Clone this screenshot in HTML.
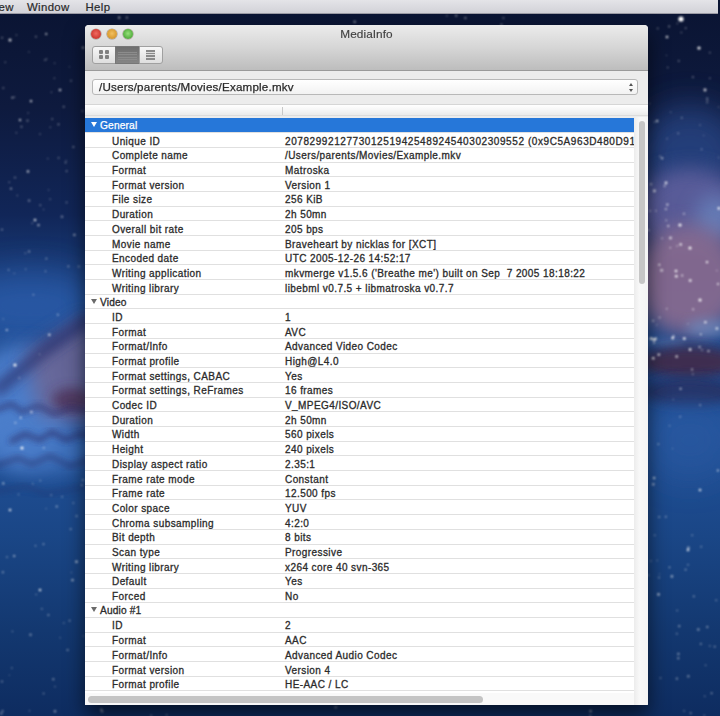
<!DOCTYPE html>
<html><head><meta charset="utf-8">
<style>
html,body{margin:0;padding:0;width:720px;height:716px;overflow:hidden;}
body{position:relative;font-family:"Liberation Sans",sans-serif;background:#0d1a3a;}
#bg{position:absolute;left:0;top:0;width:720px;height:716px;}
#menubar{position:absolute;left:0;top:0;width:718px;height:13px;background:linear-gradient(#e4e4e8,#d2d2d8);border-bottom:1px solid #9a9aa4;}
#menubar span{position:absolute;top:0.7px;font-size:11.4px;letter-spacing:0.35px;line-height:13px;color:#2a2a2a;-webkit-text-stroke:0.2px #2a2a2a;}
#shadow{position:absolute;left:85px;top:25px;width:563px;height:680px;border-radius:4px;box-shadow:0 10px 20px 0px rgba(0,0,0,0.6);}
#win{position:absolute;left:85px;top:25px;width:563px;height:680px;background:#ececec;border-radius:4px 4px 1px 1px;overflow:hidden;filter:blur(0.3px);}
#tb{position:absolute;left:0;top:0;width:563px;height:45px;background:linear-gradient(#ebebeb,#d6d6d6 50%,#bdbdbd);border-bottom:1px solid #9a9a9a;}
#title{position:absolute;left:0;width:563px;top:1.7px;text-align:center;font-size:11.8px;letter-spacing:0.05px;color:#404040;-webkit-text-stroke:0.15px #404040;}
.tl{position:absolute;top:4px;width:10px;height:10px;border-radius:50%;box-shadow:0 0 0 0.6px rgba(90,60,40,0.45);}
.seg{position:absolute;top:21px;height:18px;border:1px solid #a0a0a0;background:linear-gradient(#f7f7f7,#dedede);box-sizing:border-box;}
.seg.dark{background:linear-gradient(#6e6e6e,#858585);border-color:#777;}
.sq{position:absolute;width:4px;height:3.6px;background:#808080;border-radius:1px;}
.ln{position:absolute;left:2px;width:19px;height:1px;background:#8c8c8c;}
.bx{position:absolute;left:6px;top:3px;width:9px;height:10px;background:#8a8a8a;}
.bx div{height:1px;background:#dcdcdc;margin-top:1.6px;}
#popup{position:absolute;left:7px;top:54px;width:546px;height:15.5px;border:1px solid #b8b8b8;border-radius:3px;background:linear-gradient(#ffffff,#f2f2f2);box-sizing:border-box;}
.ar{position:absolute;left:535.5px;width:0;height:0;border-left:2px solid transparent;border-right:2px solid transparent;}
#popup span{position:absolute;left:6px;top:0px;font-size:11.6px;letter-spacing:0.2px;line-height:13px;color:#2a2a2a;-webkit-text-stroke:0.25px #2a2a2a;}
#thead{position:absolute;left:0;top:79px;width:563px;height:12px;background:linear-gradient(#ffffff,#f6f6f6 50%,#ebebeb);border-top:1px solid #d6d6d6;border-bottom:1px solid #dcdcdc;box-sizing:border-box;}
#table{position:absolute;left:0;top:0;width:549px;height:680px;}
.row{position:absolute;left:0;width:550px;height:14.69px;background:#ffffff;border-top:1px solid #e0e0e0;box-sizing:border-box;font-size:10px;letter-spacing:0.42px;line-height:13px;color:#2b2b2b;-webkit-text-stroke:0.3px #2b2b2b;white-space:pre;overflow:hidden;}
.row .k{position:absolute;left:27px;top:1.5px;}
.row .v{position:absolute;left:200px;top:1.5px;}
.hd .tri{position:absolute;left:6.4px;top:3.8px;width:0;height:0;border-left:3.1px solid transparent;border-right:3.1px solid transparent;border-top:5.8px solid #6a6a6a;}
.hd .hn{position:absolute;left:15px;top:0.8px;letter-spacing:0.15px;font-size:10.2px;}
.sel{background:#2677d9;border-top:1px solid #2677d9;}
.sel .hn{color:#fff;-webkit-text-stroke:0.25px #fff;} .sel .tri{border-top-color:#fff;}
#vs{position:absolute;left:549px;top:92px;width:14px;height:588px;background:linear-gradient(90deg,#ececec,#f8f8f8 40%,#f4f4f4);}
#vthumb{position:absolute;left:4.5px;top:4px;width:6px;height:163px;border-radius:3px;background:#c6c6c6;}
#hs{position:absolute;left:0;top:668px;width:549px;height:12px;background:#f9f9f9;}
#hthumb{position:absolute;left:3px;top:3px;width:395px;height:7px;border-radius:4px;background:#c4c4c4;}
</style></head><body>
<svg id="bg" width="720" height="716" viewBox="0 0 720 716">
 <defs>
  <linearGradient id="base" x1="0" y1="0" x2="0" y2="1">
   <stop offset="0" stop-color="#0a1432"/>
   <stop offset="0.15" stop-color="#0e1a3e"/>
   <stop offset="0.3" stop-color="#112658"/>
   <stop offset="0.42" stop-color="#1d4688"/>
   <stop offset="0.6" stop-color="#22529a"/>
   <stop offset="0.75" stop-color="#1a4686"/>
   <stop offset="0.88" stop-color="#133870"/>
   <stop offset="1" stop-color="#0e2c60"/>
  </linearGradient>
  <filter id="b16" x="-50%" y="-50%" width="200%" height="200%"><feGaussianBlur stdDeviation="16"/></filter>
  <filter id="b10" x="-50%" y="-50%" width="200%" height="200%"><feGaussianBlur stdDeviation="10"/></filter>
  <filter id="b6" x="-50%" y="-50%" width="200%" height="200%"><feGaussianBlur stdDeviation="6"/></filter>
  <filter id="b3" x="-50%" y="-50%" width="200%" height="200%"><feGaussianBlur stdDeviation="3"/></filter>
  <filter id="b1" x="-50%" y="-50%" width="200%" height="200%"><feGaussianBlur stdDeviation="0.8"/></filter>
 </defs>
 <rect width="720" height="716" fill="url(#base)"/>
 <!-- left galaxy -->
 <ellipse cx="30" cy="305" rx="70" ry="35" fill="#2f62b4" opacity="0.6" filter="url(#b16)"/>
 <ellipse cx="20" cy="405" rx="50" ry="60" fill="#5286d4" opacity="0.85" filter="url(#b10)"/>
 <ellipse cx="40" cy="450" rx="50" ry="25" fill="#4a7cc8" opacity="0.7" filter="url(#b10)"/>
 <polygon points="25,355 85,318 95,325 95,425 40,415" fill="#6a6696" opacity="0.9" filter="url(#b10)"/>
 <path d="M-5,392 L45,350 L90,318" stroke="#2c2e6a" stroke-width="12" fill="none" opacity="0.75" filter="url(#b6)"/>
 <ellipse cx="72" cy="400" rx="20" ry="12" fill="#4a2c50" opacity="0.75" filter="url(#b6)"/>
 <path d="M-5,410 L12,404 L22,412 L38,406 L55,414 L70,408 L95,412" stroke="#2c2c68" stroke-width="4" fill="none" opacity="0.75" filter="url(#b3)"/>
 <path d="M10,442 L25,434 L40,440 L52,432 L66,440 L80,434 L98,438" stroke="#2a2c66" stroke-width="4.5" fill="none" opacity="0.75" filter="url(#b3)"/>
 <path d="M-5,466 L18,458 L32,464 L50,456 L70,466 L95,458" stroke="#282c66" stroke-width="4" fill="none" opacity="0.65" filter="url(#b3)"/>
 <path d="M-5,492 L25,486 L45,494 L90,486" stroke="#24306a" stroke-width="4" fill="none" opacity="0.45" filter="url(#b3)"/>
 <!-- right galaxy -->
 <ellipse cx="690" cy="160" rx="55" ry="55" fill="#2a4a8a" opacity="0.75" filter="url(#b16)"/>
 <ellipse cx="690" cy="210" rx="55" ry="42" fill="#5e5e9c" opacity="0.9" filter="url(#b10)"/>
 <ellipse cx="715" cy="220" rx="20" ry="25" fill="#6a8ac4" opacity="0.7" filter="url(#b10)"/>
 <ellipse cx="688" cy="280" rx="55" ry="55" fill="#866a90" opacity="0.95" filter="url(#b10)"/>
 <ellipse cx="708" cy="328" rx="22" ry="9" fill="#7494c8" opacity="0.6" filter="url(#b6)"/>
 <ellipse cx="665" cy="343" rx="20" ry="5" fill="#6a8cc0" opacity="0.35" filter="url(#b3)"/>
 <ellipse cx="690" cy="362" rx="50" ry="16" fill="#432a4a" opacity="0.9" filter="url(#b6)"/>
 <ellipse cx="690" cy="392" rx="48" ry="14" fill="#262a58" opacity="0.8" filter="url(#b6)"/>
 <ellipse cx="690" cy="440" rx="45" ry="40" fill="#2a5aa2" opacity="0.6" filter="url(#b16)"/>
 <!-- stars -->
 <g fill="#fff" filter="url(#b1)">
  <circle cx="681" cy="19" r="2.6"/>
  <circle cx="699" cy="48" r="1.60" opacity="0.95"/>
  <circle cx="667" cy="37" r="1.30" opacity="0.81"/>
  <circle cx="705" cy="90" r="1.43" opacity="0.81"/>
  <circle cx="680" cy="225" r="1.60" opacity="0.95"/>
  <circle cx="690" cy="248" r="1.56" opacity="0.94"/>
  <circle cx="700" cy="300" r="1.56" opacity="0.94"/>
  <circle cx="676" cy="271" r="1.30" opacity="0.94"/>
  <circle cx="688" cy="550" r="1.30" opacity="0.81"/>
  <circle cx="700" cy="490" r="1.30" opacity="0.81"/>
  <circle cx="15" cy="365" r="1.60" opacity="0.95"/>
  <circle cx="22" cy="448" r="1.56" opacity="0.94"/>
  <circle cx="40" cy="590" r="1.30" opacity="0.81"/>
  <circle cx="10" cy="510" r="1.30" opacity="0.81"/>
  <circle cx="35" cy="220" r="1.30" opacity="0.81"/>
  <circle cx="60" cy="90" r="1.30" opacity="0.68"/>
  <circle cx="20" cy="120" r="1.17" opacity="0.68"/>
  <circle cx="27.5" cy="120.7" r="1.08" opacity="0.38"/>
  <circle cx="45.5" cy="271.3" r="0.69" opacity="0.58"/>
  <circle cx="3.2" cy="319.0" r="0.69" opacity="0.38"/>
  <circle cx="36.1" cy="594.6" r="0.73" opacity="0.45"/>
  <circle cx="53.3" cy="679.3" r="1.03" opacity="0.53"/>
  <circle cx="83.0" cy="47.7" r="1.21" opacity="0.47"/>
  <circle cx="12.3" cy="97.6" r="0.85" opacity="0.73"/>
  <circle cx="15.4" cy="422.7" r="1.07" opacity="0.51"/>
  <circle cx="46.6" cy="59.0" r="0.69" opacity="0.43"/>
  <circle cx="57.8" cy="314.7" r="0.86" opacity="0.61"/>
  <circle cx="38.5" cy="225.1" r="1.17" opacity="0.66"/>
  <circle cx="20.7" cy="417.7" r="0.99" opacity="0.76"/>
  <circle cx="62.0" cy="216.8" r="1.29" opacity="0.39"/>
  <circle cx="35.5" cy="545.8" r="0.75" opacity="0.57"/>
  <circle cx="3.3" cy="483.4" r="1.14" opacity="0.61"/>
  <circle cx="74.4" cy="234.9" r="1.10" opacity="0.62"/>
  <circle cx="49.3" cy="334.8" r="1.20" opacity="0.78"/>
  <circle cx="40.3" cy="480.6" r="0.69" opacity="0.68"/>
  <circle cx="55.0" cy="711.2" r="1.18" opacity="0.47"/>
  <circle cx="32.8" cy="483.7" r="0.66" opacity="0.55"/>
  <circle cx="14.3" cy="97.1" r="0.69" opacity="0.70"/>
  <circle cx="11.0" cy="188.6" r="0.91" opacity="0.74"/>
  <circle cx="6.8" cy="329.9" r="1.00" opacity="0.76"/>
  <circle cx="69.6" cy="620.7" r="0.83" opacity="0.54"/>
  <circle cx="30.5" cy="634.8" r="1.27" opacity="0.41"/>
  <circle cx="15.0" cy="177.6" r="0.81" opacity="0.57"/>
  <circle cx="50.1" cy="199.2" r="0.65" opacity="0.54"/>
  <circle cx="31.4" cy="412.0" r="1.27" opacity="0.66"/>
  <circle cx="43.8" cy="447.9" r="1.09" opacity="0.36"/>
  <circle cx="76.5" cy="561.8" r="1.22" opacity="0.72"/>
  <circle cx="33.4" cy="294.7" r="0.72" opacity="0.63"/>
  <circle cx="5.3" cy="62.2" r="0.78" opacity="0.42"/>
  <circle cx="28.9" cy="51.9" r="0.65" opacity="0.41"/>
  <circle cx="8.6" cy="269.9" r="0.66" opacity="0.76"/>
  <circle cx="52.2" cy="119.1" r="0.82" opacity="0.50"/>
  <circle cx="31.0" cy="101.1" r="1.20" opacity="0.81"/>
  <circle cx="39.6" cy="354.2" r="0.70" opacity="0.39"/>
  <circle cx="29.1" cy="200.6" r="1.18" opacity="0.42"/>
  <circle cx="2.0" cy="681.6" r="0.99" opacity="0.41"/>
  <circle cx="46.2" cy="34.0" r="0.99" opacity="0.80"/>
  <circle cx="73.4" cy="503.0" r="0.82" opacity="0.51"/>
  <circle cx="14.2" cy="556.1" r="1.00" opacity="0.70"/>
  <circle cx="28.0" cy="171.4" r="1.18" opacity="0.80"/>
  <circle cx="72.5" cy="580.1" r="1.18" opacity="0.69"/>
  <circle cx="19.3" cy="377.9" r="0.88" opacity="0.35"/>
  <circle cx="650.0" cy="210.9" r="0.82" opacity="0.66"/>
  <circle cx="716.9" cy="328.5" r="1.26" opacity="0.81"/>
  <circle cx="716.8" cy="270.6" r="0.79" opacity="0.45"/>
  <circle cx="662.2" cy="158.3" r="1.05" opacity="0.77"/>
  <circle cx="708.5" cy="351.1" r="1.08" opacity="0.72"/>
  <circle cx="654.1" cy="478.1" r="1.23" opacity="0.70"/>
  <circle cx="702.0" cy="350.1" r="0.77" opacity="0.72"/>
  <circle cx="671.9" cy="576.4" r="1.29" opacity="0.53"/>
  <circle cx="676.9" cy="678.7" r="1.12" opacity="0.42"/>
  <circle cx="657.1" cy="121.0" r="1.23" opacity="0.72"/>
  <circle cx="658.5" cy="594.4" r="1.29" opacity="0.65"/>
  <circle cx="673.2" cy="399.6" r="0.74" opacity="0.34"/>
  <circle cx="717.9" cy="470.4" r="0.99" opacity="0.78"/>
  <circle cx="679.2" cy="626.1" r="1.18" opacity="0.43"/>
  <circle cx="666.1" cy="220.4" r="0.81" opacity="0.62"/>
  <circle cx="666.7" cy="308.7" r="0.74" opacity="0.77"/>
  <circle cx="673.5" cy="336.2" r="1.03" opacity="0.77"/>
  <circle cx="678.3" cy="658.3" r="0.98" opacity="0.59"/>
  <circle cx="685.7" cy="28.1" r="0.94" opacity="0.42"/>
  <circle cx="648.3" cy="575.2" r="0.77" opacity="0.57"/>
  <circle cx="700.2" cy="405.1" r="0.86" opacity="0.58"/>
  <circle cx="688.0" cy="564.8" r="0.72" opacity="0.61"/>
  <circle cx="665.9" cy="209.1" r="1.16" opacity="0.58"/>
  <circle cx="688.4" cy="547.8" r="1.25" opacity="0.55"/>
  <circle cx="692.1" cy="369.4" r="0.99" opacity="0.66"/>
  <circle cx="680.6" cy="388.8" r="0.96" opacity="0.78"/>
  <circle cx="698.3" cy="629.5" r="1.26" opacity="0.46"/>
  <circle cx="688.3" cy="676.2" r="1.20" opacity="0.41"/>
  <circle cx="656.8" cy="324.9" r="0.70" opacity="0.45"/>
  <circle cx="653.3" cy="484.3" r="1.16" opacity="0.76"/>
  <circle cx="659.1" cy="517.0" r="1.08" opacity="0.41"/>
  <circle cx="711.6" cy="693.2" r="0.79" opacity="0.78"/>
  <circle cx="676.7" cy="356.6" r="1.29" opacity="0.73"/>
  <circle cx="659.6" cy="317.5" r="0.99" opacity="0.50"/>
  <circle cx="662.1" cy="238.3" r="1.12" opacity="0.35"/>
  <circle cx="687.9" cy="323.8" r="0.66" opacity="0.50"/>
  <circle cx="692.9" cy="374.1" r="0.69" opacity="0.80"/>
  <circle cx="704.8" cy="696.2" r="0.72" opacity="0.46"/>
  <circle cx="650.9" cy="561.1" r="0.83" opacity="0.41"/>
  <circle cx="678.4" cy="653.9" r="1.18" opacity="0.46"/>
  <circle cx="658.8" cy="354.6" r="1.22" opacity="0.95"/>
  <circle cx="654.4" cy="190.9" r="1.31" opacity="0.80"/>
  <circle cx="653.2" cy="358.3" r="1.27" opacity="0.95"/>
  <circle cx="654.0" cy="342.7" r="0.83" opacity="0.95"/>
  <circle cx="680.7" cy="244.4" r="1.21" opacity="0.95"/>
  <circle cx="667.3" cy="204.6" r="1.20" opacity="0.69"/>
  <circle cx="655.9" cy="210.7" r="0.82" opacity="0.66"/>
  <circle cx="670.5" cy="238.0" r="1.38" opacity="0.72"/>
  <circle cx="684.0" cy="213.8" r="1.05" opacity="0.55"/>
  <circle cx="666.0" cy="182.9" r="1.35" opacity="0.88"/>
  <circle cx="661.6" cy="270.2" r="1.51" opacity="0.61"/>
  <circle cx="707.0" cy="262.1" r="1.17" opacity="0.95"/>
  <circle cx="676.3" cy="276.3" r="1.31" opacity="0.95"/>
  <circle cx="672.7" cy="338.1" r="1.33" opacity="0.93"/>
  <circle cx="677.1" cy="246.0" r="0.82" opacity="0.62"/>
  <circle cx="653.1" cy="320.8" r="0.98" opacity="0.63"/>
  <circle cx="654.1" cy="339.8" r="1.46" opacity="0.94"/>
  <circle cx="668.3" cy="226.0" r="1.01" opacity="0.82"/>
  <circle cx="659.3" cy="264.7" r="0.99" opacity="0.95"/>
  <circle cx="718.0" cy="283.9" r="0.98" opacity="0.95"/>
  <circle cx="670.3" cy="247.8" r="0.78" opacity="0.77"/>
  <circle cx="682.2" cy="275.5" r="0.94" opacity="0.85"/>
  <circle cx="648.4" cy="230.2" r="0.85" opacity="0.78"/>
  <circle cx="651.0" cy="184.3" r="1.01" opacity="0.68"/>
  <circle cx="690.2" cy="280.5" r="1.37" opacity="0.94"/>
  <circle cx="699.6" cy="347.0" r="1.08" opacity="0.74"/>
  <circle cx="718.9" cy="208.4" r="1.34" opacity="0.93"/>
  <circle cx="651.2" cy="338.7" r="1.48" opacity="0.92"/>
  <circle cx="700.8" cy="334.3" r="0.88" opacity="0.86"/>
  <circle cx="684.3" cy="338.6" r="1.40" opacity="0.95"/>
  <circle cx="690.1" cy="349.6" r="1.31" opacity="0.95"/>
  <circle cx="664.6" cy="185.9" r="0.88" opacity="0.76"/>
  <circle cx="655.6" cy="338.8" r="1.22" opacity="0.92"/>
  <circle cx="693.1" cy="309.3" r="1.16" opacity="0.54"/>
  <circle cx="705.4" cy="322.2" r="1.17" opacity="0.86"/>
  <circle cx="456.2" cy="15.7" r="1.13" opacity="0.46"/>
  <circle cx="126.9" cy="17.7" r="1.12" opacity="0.43"/>
  <circle cx="501.5" cy="24.8" r="0.98" opacity="0.51"/>
  <circle cx="354.7" cy="21.8" r="1.14" opacity="0.63"/>
  <circle cx="446.9" cy="15.8" r="0.74" opacity="0.46"/>
  <circle cx="503.4" cy="18.0" r="1.01" opacity="0.34"/>
  <circle cx="119.2" cy="17.7" r="1.09" opacity="0.66"/>
  <circle cx="465.4" cy="17.9" r="0.99" opacity="0.55"/>
  <circle cx="335.8" cy="707.2" r="1.23" opacity="0.43"/>
  <circle cx="704.3" cy="715.4" r="0.66" opacity="0.55"/>
  <circle cx="590.3" cy="715.7" r="0.94" opacity="0.46"/>
  <circle cx="151.1" cy="715.5" r="0.79" opacity="0.61"/>
  <circle cx="102.1" cy="711.2" r="1.27" opacity="0.41"/>
  <circle cx="590.6" cy="711.1" r="1.22" opacity="0.68"/>
  <circle cx="166.6" cy="715.0" r="0.96" opacity="0.35"/>
  <circle cx="2.6" cy="710.9" r="0.95" opacity="0.49"/>
  <circle cx="101.3" cy="709.4" r="0.86" opacity="0.73"/>
  <circle cx="1.3" cy="713.5" r="1.20" opacity="0.39"/>
  <circle cx="78.6" cy="266.4" r="0.96" opacity="0.33"/>
  <circle cx="50.3" cy="127.3" r="0.81" opacity="0.34"/>
  <circle cx="16.3" cy="132.8" r="0.69" opacity="0.44"/>
  <circle cx="2.1" cy="37.7" r="0.88" opacity="0.43"/>
  <circle cx="43.6" cy="209.6" r="0.74" opacity="0.32"/>
  <circle cx="66.6" cy="171.1" r="0.86" opacity="0.49"/>
  <circle cx="82.5" cy="111.1" r="0.90" opacity="0.41"/>
  <circle cx="48.6" cy="190.0" r="0.73" opacity="0.33"/>
  <circle cx="40.3" cy="205.2" r="0.84" opacity="0.43"/>
  <circle cx="54.6" cy="63.2" r="0.67" opacity="0.40"/>
  <circle cx="69.3" cy="66.8" r="0.65" opacity="0.33"/>
  <circle cx="3.3" cy="88.0" r="0.83" opacity="0.55"/>
  <circle cx="28.1" cy="113.0" r="0.72" opacity="0.39"/>
  <circle cx="66.1" cy="160.5" r="0.70" opacity="0.33"/>
  <circle cx="66.6" cy="202.4" r="0.93" opacity="0.37"/>
  <circle cx="46.4" cy="258.5" r="0.84" opacity="0.58"/>
  <circle cx="14.2" cy="273.4" r="0.62" opacity="0.42"/>
  <circle cx="2.0" cy="229.5" r="0.87" opacity="0.59"/>
  <circle cx="68.4" cy="266.4" r="0.82" opacity="0.60"/>
  <circle cx="63.7" cy="106.7" r="0.99" opacity="0.41"/>
  <circle cx="16.4" cy="35.1" r="0.79" opacity="0.36"/>
  <circle cx="79.4" cy="266.9" r="0.69" opacity="0.33"/>
  <circle cx="45.0" cy="60.0" r="0.82" opacity="0.54"/>
  <circle cx="21.5" cy="126.8" r="0.96" opacity="0.43"/>
  <circle cx="29.1" cy="251.5" r="0.93" opacity="0.57"/>
  <circle cx="58.5" cy="124.3" r="0.88" opacity="0.55"/>
  <circle cx="54.4" cy="78.2" r="0.72" opacity="0.42"/>
  <circle cx="65.6" cy="162.6" r="0.82" opacity="0.55"/>
  <circle cx="9.2" cy="182.3" r="0.73" opacity="0.47"/>
  <circle cx="71.0" cy="80.8" r="0.98" opacity="0.32"/>
  <circle cx="47.8" cy="158.6" r="0.69" opacity="0.47"/>
  <circle cx="40.0" cy="134.1" r="0.89" opacity="0.30"/>
  <circle cx="32.1" cy="223.2" r="0.66" opacity="0.56"/>
  <circle cx="17.3" cy="195.5" r="0.67" opacity="0.43"/>
  <circle cx="35.9" cy="36.7" r="0.88" opacity="0.44"/>
  <circle cx="58.6" cy="157.9" r="0.82" opacity="0.46"/>
  <circle cx="25.3" cy="253.2" r="0.63" opacity="0.56"/>
  <circle cx="73.4" cy="146.9" r="0.91" opacity="0.50"/>
  <circle cx="51.4" cy="92.3" r="0.73" opacity="0.40"/>
  <circle cx="25.7" cy="269.3" r="0.74" opacity="0.42"/>
  <circle cx="678.2" cy="133.4" r="0.79" opacity="0.47"/>
  <circle cx="666.4" cy="55.3" r="0.64" opacity="0.37"/>
  <circle cx="667.0" cy="138.6" r="0.80" opacity="0.33"/>
  <circle cx="681.3" cy="32.5" r="0.83" opacity="0.43"/>
  <circle cx="709.8" cy="52.6" r="0.94" opacity="0.37"/>
  <circle cx="718.7" cy="107.0" r="0.62" opacity="0.54"/>
  <circle cx="667.8" cy="67.5" r="0.66" opacity="0.55"/>
  <circle cx="654.5" cy="122.0" r="0.76" opacity="0.50"/>
  <circle cx="669.1" cy="26.4" r="0.97" opacity="0.50"/>
  <circle cx="660.2" cy="156.5" r="0.96" opacity="0.35"/>
  <circle cx="649.4" cy="103.6" r="0.66" opacity="0.52"/>
  <circle cx="681.8" cy="117.8" r="0.83" opacity="0.53"/>
  <circle cx="707.2" cy="102.4" r="0.84" opacity="0.40"/>
  <circle cx="657.7" cy="28.4" r="0.94" opacity="0.36"/>
  <circle cx="678.7" cy="60.9" r="0.85" opacity="0.46"/>
  <circle cx="709.9" cy="78.2" r="0.74" opacity="0.50"/>
  <circle cx="701.6" cy="149.2" r="0.72" opacity="0.57"/>
  <circle cx="718.7" cy="157.4" r="0.65" opacity="0.41"/>
  <circle cx="703.7" cy="135.5" r="0.62" opacity="0.42"/>
  <circle cx="700.1" cy="125.0" r="0.81" opacity="0.36"/>
  <circle cx="677.3" cy="23.5" r="0.73" opacity="0.43"/>
  <circle cx="707.3" cy="100.5" r="0.77" opacity="0.37"/>
  <circle cx="670.7" cy="112.3" r="0.78" opacity="0.35"/>
  <circle cx="707.2" cy="98.5" r="0.99" opacity="0.46"/>
  <circle cx="692.9" cy="77.0" r="0.84" opacity="0.58"/>
  <circle cx="83.4" cy="636.0" r="0.77" opacity="0.32"/>
  <circle cx="71.4" cy="572.4" r="0.75" opacity="0.32"/>
  <circle cx="2.9" cy="572.2" r="0.99" opacity="0.52"/>
  <circle cx="60.2" cy="637.8" r="0.71" opacity="0.35"/>
  <circle cx="51.2" cy="495.0" r="0.84" opacity="0.45"/>
  <circle cx="46.1" cy="508.6" r="0.63" opacity="0.44"/>
  <circle cx="12.4" cy="631.4" r="0.72" opacity="0.49"/>
  <circle cx="63.8" cy="623.1" r="0.81" opacity="0.36"/>
  <circle cx="29.5" cy="710.8" r="0.71" opacity="0.39"/>
  <circle cx="41.9" cy="608.8" r="0.92" opacity="0.39"/>
  <circle cx="81.8" cy="485.2" r="0.92" opacity="0.47"/>
  <circle cx="76.6" cy="516.1" r="0.88" opacity="0.58"/>
  <circle cx="56.7" cy="506.5" r="0.97" opacity="0.59"/>
  <circle cx="9.4" cy="675.2" r="0.63" opacity="0.32"/>
  <circle cx="67.6" cy="649.9" r="0.98" opacity="0.49"/>
  <circle cx="43.5" cy="544.2" r="0.83" opacity="0.60"/>
  <circle cx="55.0" cy="686.6" r="0.68" opacity="0.52"/>
  <circle cx="62.2" cy="496.7" r="0.93" opacity="0.35"/>
  <circle cx="18.5" cy="494.4" r="0.87" opacity="0.34"/>
  <circle cx="82.9" cy="480.0" r="0.92" opacity="0.53"/>
  <circle cx="48.4" cy="615.0" r="0.92" opacity="0.49"/>
  <circle cx="11.8" cy="668.1" r="0.74" opacity="0.48"/>
  <circle cx="43.6" cy="693.4" r="0.77" opacity="0.56"/>
  <circle cx="7.0" cy="557.0" r="0.87" opacity="0.48"/>
  <circle cx="70.7" cy="529.1" r="0.92" opacity="0.54"/>
  <circle cx="658.3" cy="444.2" r="0.83" opacity="0.59"/>
  <circle cx="692.2" cy="535.2" r="0.80" opacity="0.54"/>
  <circle cx="685.6" cy="569.6" r="0.84" opacity="0.58"/>
  <circle cx="705.6" cy="665.2" r="0.71" opacity="0.48"/>
  <circle cx="707.3" cy="626.9" r="0.98" opacity="0.57"/>
  <circle cx="657.2" cy="560.6" r="0.74" opacity="0.36"/>
  <circle cx="684.1" cy="710.8" r="0.91" opacity="0.33"/>
  <circle cx="665.8" cy="516.8" r="0.95" opacity="0.44"/>
  <circle cx="659.5" cy="573.9" r="0.70" opacity="0.31"/>
  <circle cx="690.7" cy="713.1" r="0.91" opacity="0.52"/>
  <circle cx="659.0" cy="577.5" r="0.85" opacity="0.53"/>
  <circle cx="680.2" cy="416.8" r="0.97" opacity="0.38"/>
  <circle cx="701.2" cy="546.7" r="0.91" opacity="0.40"/>
  <circle cx="654.7" cy="535.3" r="0.79" opacity="0.54"/>
  <circle cx="677.1" cy="610.6" r="0.75" opacity="0.52"/>
  <circle cx="660.5" cy="678.1" r="0.98" opacity="0.31"/>
  <circle cx="709.8" cy="645.9" r="0.88" opacity="0.33"/>
  <circle cx="700.8" cy="643.8" r="0.85" opacity="0.59"/>
  <circle cx="716.2" cy="600.2" r="0.97" opacity="0.34"/>
  <circle cx="669.5" cy="567.4" r="0.81" opacity="0.59"/>
  <circle cx="693.8" cy="596.3" r="0.85" opacity="0.58"/>
  <circle cx="676.8" cy="633.7" r="0.84" opacity="0.42"/>
  <circle cx="672.4" cy="448.6" r="0.60" opacity="0.40"/>
  <circle cx="669.6" cy="425.7" r="0.79" opacity="0.41"/>
  <circle cx="714.7" cy="646.6" r="0.87" opacity="0.55"/>
  <circle cx="10" cy="40" r="1.5" opacity="0.8"/>
 </g>
</svg>
<div id="menubar"><span style="left:-1.5px">ew</span><span style="left:27px">Window</span><span style="left:85.5px">Help</span></div>
<div id="shadow"></div>
<div id="win">
 <div id="table">
 <div class="row hd sel" style="top:92.50px"><span class="tri"></span><span class="hn">General</span></div>
<div class="row" style="top:107.19px"><span class="k">Unique ID</span><span class="v"><span style='letter-spacing:0.58px'>207829921277301251942548924540302309552 (0x9C5A963D480D91</span></span></div>
<div class="row" style="top:121.88px"><span class="k">Complete name</span><span class="v">/Users/parents/Movies/Example.mkv</span></div>
<div class="row" style="top:136.57px"><span class="k">Format</span><span class="v">Matroska</span></div>
<div class="row" style="top:151.26px"><span class="k">Format version</span><span class="v">Version 1</span></div>
<div class="row" style="top:165.95px"><span class="k">File size</span><span class="v">256 KiB</span></div>
<div class="row" style="top:180.64px"><span class="k">Duration</span><span class="v">2h 50mn</span></div>
<div class="row" style="top:195.33px"><span class="k">Overall bit rate</span><span class="v">205 bps</span></div>
<div class="row" style="top:210.02px"><span class="k">Movie name</span><span class="v">Braveheart by nicklas for [XCT]</span></div>
<div class="row" style="top:224.71px"><span class="k">Encoded date</span><span class="v">UTC 2005-12-26 14:52:17</span></div>
<div class="row" style="top:239.40px"><span class="k">Writing application</span><span class="v">mkvmerge v1.5.6 ('Breathe me') built on Sep&nbsp; 7 2005 18:18:22</span></div>
<div class="row" style="top:254.09px"><span class="k">Writing library</span><span class="v">libebml v0.7.5 + libmatroska v0.7.7</span></div>
<div class="row hd" style="top:268.78px"><span class="tri"></span><span class="hn">Video</span></div>
<div class="row" style="top:283.47px"><span class="k">ID</span><span class="v">1</span></div>
<div class="row" style="top:298.16px"><span class="k">Format</span><span class="v">AVC</span></div>
<div class="row" style="top:312.85px"><span class="k">Format/Info</span><span class="v">Advanced Video Codec</span></div>
<div class="row" style="top:327.54px"><span class="k">Format profile</span><span class="v">High@L4.0</span></div>
<div class="row" style="top:342.23px"><span class="k">Format settings, CABAC</span><span class="v">Yes</span></div>
<div class="row" style="top:356.92px"><span class="k">Format settings, ReFrames</span><span class="v">16 frames</span></div>
<div class="row" style="top:371.61px"><span class="k">Codec ID</span><span class="v">V_MPEG4/ISO/AVC</span></div>
<div class="row" style="top:386.30px"><span class="k">Duration</span><span class="v">2h 50mn</span></div>
<div class="row" style="top:400.99px"><span class="k">Width</span><span class="v">560 pixels</span></div>
<div class="row" style="top:415.68px"><span class="k">Height</span><span class="v">240 pixels</span></div>
<div class="row" style="top:430.37px"><span class="k">Display aspect ratio</span><span class="v">2.35:1</span></div>
<div class="row" style="top:445.06px"><span class="k">Frame rate mode</span><span class="v">Constant</span></div>
<div class="row" style="top:459.75px"><span class="k">Frame rate</span><span class="v">12.500 fps</span></div>
<div class="row" style="top:474.44px"><span class="k">Color space</span><span class="v">YUV</span></div>
<div class="row" style="top:489.13px"><span class="k">Chroma subsampling</span><span class="v">4:2:0</span></div>
<div class="row" style="top:503.82px"><span class="k">Bit depth</span><span class="v">8 bits</span></div>
<div class="row" style="top:518.51px"><span class="k">Scan type</span><span class="v">Progressive</span></div>
<div class="row" style="top:533.20px"><span class="k">Writing library</span><span class="v">x264 core 40 svn-365</span></div>
<div class="row" style="top:547.89px"><span class="k">Default</span><span class="v">Yes</span></div>
<div class="row" style="top:562.58px"><span class="k">Forced</span><span class="v">No</span></div>
<div class="row hd" style="top:577.27px"><span class="tri"></span><span class="hn">Audio #1</span></div>
<div class="row" style="top:591.96px"><span class="k">ID</span><span class="v">2</span></div>
<div class="row" style="top:606.65px"><span class="k">Format</span><span class="v">AAC</span></div>
<div class="row" style="top:621.34px"><span class="k">Format/Info</span><span class="v">Advanced Audio Codec</span></div>
<div class="row" style="top:636.03px"><span class="k">Format version</span><span class="v">Version 4</span></div>
<div class="row" style="top:650.72px"><span class="k">Format profile</span><span class="v">HE-AAC / LC</span></div>
<div class="row" style="top:665.41px"><span class="k"></span><span class="v"></span></div>
 </div>
 <div id="tb">
  <div class="tl" style="left:6px;background:radial-gradient(circle at 50% 45%,#f06a60,#cf3a32 65%,#9a2a22);"></div>
  <div class="tl" style="left:22px;background:radial-gradient(circle at 50% 45%,#f2c060,#d89a30 65%,#a87520);"></div>
  <div class="tl" style="left:38px;background:radial-gradient(circle at 50% 45%,#96e07a,#56b040 65%,#3a8a2a);"></div>
  <div id="title">MediaInfo</div>
  <div class="seg" style="left:7px;width:24px;border-radius:3px 0 0 3px;">
   <div class="sq" style="left:6.3px;top:3.3px"></div><div class="sq" style="left:11.8px;top:3.3px"></div>
   <div class="sq" style="left:6.3px;top:8.3px"></div><div class="sq" style="left:11.8px;top:8.3px"></div>
  </div>
  <div class="seg dark" style="left:30px;width:25px;">
   <div class="ln" style="top:4.5px"></div><div class="ln" style="top:7px"></div><div class="ln" style="top:9.5px"></div><div class="ln" style="top:12px"></div>
  </div>
  <div class="seg" style="left:54px;width:23.5px;border-radius:0 3px 3px 0;">
   <div class="bx"><div></div><div></div><div></div></div>
  </div>
 </div>
 <div id="popup"><span>/Users/parents/Movies/Example.mkv</span><div class="ar" style="top:3px;border-bottom:3px solid #555"></div><div class="ar" style="top:8.5px;border-top:3px solid #555"></div></div>
 <div id="thead"><div style="position:absolute;left:197px;top:2px;width:1px;height:8px;background:#c8c8c8"></div></div>
 <div id="vs"><div id="vthumb"></div></div>
 <div id="hs"><div id="hthumb"></div></div>
</div>
</body></html>
